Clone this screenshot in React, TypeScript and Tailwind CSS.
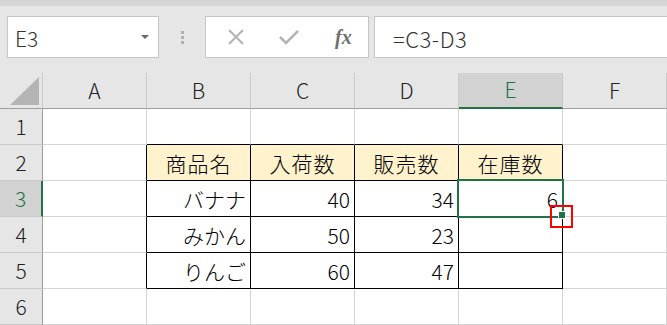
import React from 'react'

const font = { fontFamily: '"Noto Sans CJK JP", "Noto Sans", sans-serif' }

const cols = ['A', 'B', 'C', 'D', 'E', 'F']

type Cell = { v: string; align?: 'c' | 'r'; head?: boolean }

const table: Record<number, Record<string, Cell>> = {
  2: {
    B: { v: '商品名', align: 'c', head: true },
    C: { v: '入荷数', align: 'c', head: true },
    D: { v: '販売数', align: 'c', head: true },
    E: { v: '在庫数', align: 'c', head: true },
  },
  3: { B: { v: 'バナナ', align: 'r' }, C: { v: '40', align: 'r' }, D: { v: '34', align: 'r' }, E: { v: '6', align: 'r' } },
  4: { B: { v: 'みかん', align: 'r' }, C: { v: '50', align: 'r' }, D: { v: '23', align: 'r' }, E: { v: '', align: 'r' } },
  5: { B: { v: 'りんご', align: 'r' }, C: { v: '60', align: 'r' }, D: { v: '47', align: 'r' }, E: { v: '', align: 'r' } },
}

const inTable = (r: number, c: string) => r >= 2 && r <= 5 && ['B', 'C', 'D', 'E'].includes(c)

function FormulaBar() {
  return (
    <div className="h-[73px] bg-[#e6e6e6] flex flex-col">
      <div className="h-[6px] bg-[#d6d6d6]" />
      <div className="flex items-start pt-[10px] pl-[7px]">
        <div className="w-[152px] h-[42px] bg-white border border-[#c6c6c6] flex items-center justify-between pl-[7px] pr-[9px]">
          <span className="text-[21px] font-light text-[#333] pt-[3px]">E3</span>
          <span className="w-0 h-0 border-l-[4px] border-r-[4px] border-t-[4px] border-l-transparent border-r-transparent border-t-[#6a6a6a]" />
        </div>
        <div className="w-[46px] h-[42px] flex flex-col items-center justify-center gap-[2px]">
          <span className="w-[3px] h-[3px] bg-[#b0b0b0]" />
          <span className="w-[3px] h-[3px] bg-[#b0b0b0]" />
          <span className="w-[3px] h-[3px] bg-[#b0b0b0]" />
        </div>
        <div className="w-[164px] h-[42px] bg-white border border-[#c6c6c6] flex items-center">
          <svg width="18" height="18" viewBox="0 0 18 18" className="ml-[21px]">
            <path d="M2 2 L16 16 M16 2 L2 16" stroke="#b3b3b3" strokeWidth="2" fill="none" />
          </svg>
          <svg width="20" height="16" viewBox="0 0 20 16" className="ml-[34px]">
            <path d="M1 8 L7 14 L19 2" stroke="#b3b3b3" strokeWidth="2.5" fill="none" />
          </svg>
          <span className="ml-[36px] text-[20px] italic font-bold text-[#707070]" style={{ fontFamily: '"Liberation Serif", serif' }}>
            fx
          </span>
        </div>
        <div className="ml-[5px] flex-1 h-[42px] bg-white border border-[#c6c6c6] border-r-0 flex items-center pl-[18px]">
          <span className="text-[22px] font-light text-[#333] pt-[2px] tracking-[0.5px]">=C3-D3</span>
        </div>
      </div>
    </div>
  )
}

export default function App() {
  return (
    <div className="relative w-[667px] h-[325px] overflow-hidden bg-white" style={font}>
      <FormulaBar />

      <div className="grid grid-cols-[43px_104px_104px_104px_104px_104px_1fr] font-light">
        {/* header row */}
        <div className="h-[36px] bg-[#e6e6e6] border-r border-b border-r-[#c8c8c8] border-b-[#9e9e9e] flex items-end justify-end pr-[3px] pb-[3px]">
          <svg width="29" height="28" viewBox="0 0 29 28">
            <polygon points="0,28 29,0 29,28" fill="#b4b4b4" />
          </svg>
        </div>
        {cols.map((c) => (
          <div
            key={c}
            className={
              c === 'E'
                ? 'h-[36px] bg-[#d2d2d2] border-r border-r-[#c8c8c8] border-b-2 border-b-[#217346] flex items-center justify-center text-[21px] text-[#217346]'
                : 'h-[36px] bg-[#e6e6e6] border-r border-r-[#c8c8c8] border-b border-b-[#9e9e9e] flex items-center justify-center text-[21px] text-[#222]'
            }
          >
            {c}
          </div>
        ))}

        {[1, 2, 3, 4, 5, 6].map((r) => (
          <React.Fragment key={r}>
            <div
              className={
                r === 3
                  ? 'h-[36px] bg-[#d2d2d2] border-b border-b-[#c8c8c8] border-r-2 border-r-[#217346] flex items-center justify-center text-[21px] text-[#217346]'
                  : 'h-[36px] bg-[#e6e6e6] border-b border-b-[#c8c8c8] border-r border-r-[#9e9e9e] flex items-center justify-center text-[21px] text-[#222]'
              }
            >
              {r}
            </div>
            {cols.map((c, i) => {
              const cell = table[r]?.[c]
              const next = cols[i + 1]
              const rightBlack = inTable(r, c) || (next !== undefined && inTable(r, next))
              const bottomBlack = inTable(r, c) || inTable(r + 1, c)
              return (
                <div
                  key={c}
                  className={[
                    'h-[36px] border-r border-b flex items-center text-[21px] text-black pt-[2px]',
                    rightBlack ? 'border-r-black' : 'border-r-[#d4d4d4]',
                    bottomBlack ? 'border-b-black' : 'border-b-[#d4d4d4]',
                    cell?.head ? 'bg-[#fff2cc] tracking-[1px]' : '',
                    cell?.align === 'c' ? 'justify-center' : 'justify-end pr-[4px]',
                  ].join(' ')}
                >
                  {cell?.v}
                </div>
              )
            })}
          </React.Fragment>
        ))}
      </div>

      {/* active cell E3 */}
      <div className="absolute left-[457px] top-[179px] w-[107px] h-[39px] border-2 border-[#217346]" />
      {/* fill handle */}
      <div className="absolute left-[558px] top-[211px] w-[8px] h-[8px] bg-[#217346] border border-white" />
      {/* callout */}
      <div className="absolute left-[550px] top-[205px] w-[23px] h-[23px] border-2 border-[#ff0000]" />
    </div>
  )
}
